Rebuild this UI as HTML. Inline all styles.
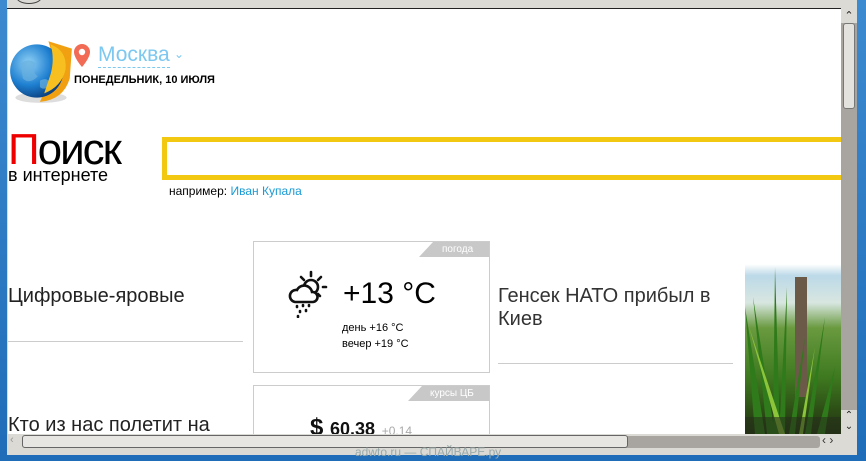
<!DOCTYPE html>
<html><head><meta charset="utf-8"><style>
*{margin:0;padding:0;box-sizing:border-box}
body{width:866px;height:461px;overflow:hidden;background:#2a78c0;font-family:"Liberation Sans","DejaVu Sans",sans-serif;position:relative}
.a{position:absolute}
</style></head><body>
<div class="a" style="left:0;top:0;width:866px;height:461px;background:linear-gradient(#3d8ad0,#1f6cb8)"></div>
<div class="a" style="left:7px;top:0;width:850px;height:455px;background:#dcdad5"></div>
<div class="a" style="left:7px;top:8px;width:834px;height:1px;background:#222"></div>
<div class="a" style="left:16px;top:-10px;width:26px;height:14px;border:1px solid #444;border-radius:50%"></div>
<div class="a" style="left:8px;top:9px;width:833px;height:425px;background:#fff;overflow:hidden">
 <svg class="a" style="left:0px;top:29px" width="66" height="66" viewBox="0 0 62 62">
  <defs><radialGradient id="g" cx="35%" cy="35%" r="70%"><stop offset="0" stop-color="#8fd0f5"/><stop offset=".6" stop-color="#1e7fd0"/><stop offset="1" stop-color="#0b3f80"/></radialGradient></defs>
  <ellipse cx="31" cy="56" rx="24" ry="5" fill="#ddd"/>
  <path d="M38 3 L60 10 L58 38 Q52 58 30 60 L36 46 Q46 40 44 24 Z" fill="#f0a010"/>
  <circle cx="27" cy="31" r="25" fill="url(#g)"/>
  <path d="M12 24 Q20 18 26 24 Q22 32 28 36 Q20 44 14 38 Z M30 40 Q38 36 40 44 Q34 50 30 46Z" fill="#6ab0e0" opacity=".7"/>
  <path d="M40 6 Q56 12 54 30 Q50 46 34 52 L40 34 Q44 20 40 6Z" fill="#f7c020"/>
 </svg>
 <svg class="a" style="left:64px;top:34px" width="20" height="26" viewBox="0 0 20 26"><path d="M10 1a8 8 0 0 0-8 8c0 6 8 15 8 15s8-9 8-15a8 8 0 0 0-8-8z" fill="#f26b55"/><circle cx="10" cy="9" r="3.2" fill="#fff"/></svg>
 <div class="a" style="left:90px;top:33px;font-size:21px;color:#7cc8f0;border-bottom:1px dashed #7cc8f0;line-height:25px">Москва</div>
 <div class="a" style="left:166px;top:38px;font-size:12px;color:#7cc8f0">⌄</div>
 <div class="a" style="left:66px;top:65px;font-size:11px;font-weight:bold;color:#000">ПОНЕДЕЛЬНИК, 10 ИЮЛЯ</div>
 <div class="a" style="left:0px;top:119px;font-size:44px;line-height:44px;color:#000;letter-spacing:-2px"><span style="color:#e00">П</span>оиск</div>
 <div class="a" style="left:0px;top:156px;font-size:18px;color:#000">в интернете</div>
 <div class="a" style="left:154px;top:128px;width:700px;height:43px;border:5px solid #f2c811;border-right:none"></div>
 <div class="a" style="left:161px;top:175px;font-size:12px;color:#000">например: <span style="color:#1a9ad6">Иван Купала</span></div>
 <div class="a" style="left:0;top:276px;font-size:20px;color:#222">Цифровые-яровые</div>
 <div class="a" style="left:0;top:332px;width:235px;height:1px;background:#ccc"></div>
 <div class="a" style="left:0;top:405px;font-size:20px;color:#222">Кто из нас полетит на</div>
 <div class="a" style="left:245px;top:232px;width:237px;height:132px;border:1px solid #ccc"></div>
 <div class="a" style="left:411px;top:233px;width:70px;height:15px;background:#c8c8c8;clip-path:polygon(14px 0,100% 0,100% 100%,0 100%)"></div>
 <div class="a" style="left:434px;top:235px;font-size:10px;color:#fff">погода</div>
 <svg class="a" style="left:279px;top:259px" width="44" height="50" viewBox="0 0 44 50" fill="none" stroke="#111" stroke-width="2.6" stroke-linecap="round">
  <circle cx="24" cy="19" r="7"/><path d="M24 4v4M34 9l-3 3M36 19h3M33 28l-2-2M14 9l3 3"/>
  <path d="M8 34a6 6 0 0 1 2-12a8 8 0 0 1 15 2a5 5 0 0 1 1 10z" fill="#fff"/>
  <path d="M10 38v1M16 37v1M22 37v1M13 43v1M19 42v1M11 48v1"/>
 </svg>
 <div class="a" style="left:335px;top:268px;font-size:30px;color:#000">+13 °C</div>
 <div class="a" style="left:334px;top:311px;font-size:11px;color:#000;line-height:16px">день +16 °C<br>вечер +19 °C</div>
 <div class="a" style="left:245px;top:376px;width:237px;height:60px;border:1px solid #ccc"></div>
 <div class="a" style="left:400px;top:377px;width:81px;height:15px;background:#c8c8c8;clip-path:polygon(14px 0,100% 0,100% 100%,0 100%)"></div>
 <div class="a" style="left:422px;top:379px;font-size:10px;color:#fff">курсы ЦБ</div>
 <div class="a" style="left:302px;top:405px;font-size:24px;font-weight:bold;color:#111">$ <span style="font-size:18px">60.38</span> <span style="font-size:12px;color:#aaa;font-weight:normal">+0.14</span></div>
 <div class="a" style="left:490px;top:276px;font-size:20px;color:#333;line-height:23px">Генсек НАТО прибыл в<br>Киев</div>
 <div class="a" style="left:490px;top:354px;width:235px;height:1px;background:#ccc"></div>
 <div class="a" style="left:737px;top:232px;width:96px;height:193px;background:linear-gradient(#fff 0,#fff 12%,#bcd9e8 18%,#d8e6e0 32%,#6a9a40 45%,#3f7a20 70%,#20300f 100%)"></div>
 <svg class="a" style="left:737px;top:258px" width="96" height="167" viewBox="0 0 96 167">
  <rect x="50" y="10" width="12" height="120" fill="#6b5a48"/>
  <path d="M0 40 L20 167 L10 167Z M8 30 L30 167 L22 167Z M30 0 L35 167 L28 167Z M42 20 L40 167 L34 167Z M60 70 L50 167 L44 167Z M80 50 L66 167 L60 167Z M90 100 L80 167 L72 167Z" fill="#2f7a1a"/>
  <path d="M4 60 L40 167 L34 167Z M70 80 L58 167 L54 167Z" fill="#8cc43a"/>
  <rect x="0" y="150" width="96" height="17" fill="#26301a" opacity=".6"/>
 </svg>
</div>
<div class="a" style="left:841px;top:9px;width:16px;height:425px;background:#a8a4a0"></div>
<div class="a" style="left:841px;top:9px;width:16px;height:14px;background:#dcdad5;font-size:11px;text-align:center;color:#222">⌃</div>
<div class="a" style="left:843px;top:23px;width:12px;height:86px;background:#e4e2de;border:1px solid #777;border-radius:3px"></div>
<div class="a" style="left:841px;top:410px;width:16px;height:24px;background:#dcdad5;font-size:10px;text-align:center;color:#222;line-height:11px">⌃<br>⌄</div>
<div class="a" style="left:8px;top:434px;width:849px;height:15px;background:#dcdad5"></div>
<div class="a" style="left:22px;top:436px;width:798px;height:12px;background:#a8a4a0;border-radius:3px"></div>
<div class="a" style="left:22px;top:435px;width:606px;height:13px;background:#e8e6e2;border:1px solid #666;border-radius:3px"></div>
<div class="a" style="left:10px;top:434px;font-size:11px;color:#999">‹</div>
<div class="a" style="left:822px;top:433px;font-size:12px;color:#333">‹ ›</div>
<div class="a" style="left:355px;top:445px;font-size:12px;color:#9aa">adwto.ru — СПАЙВАРЕ.ру</div>
</body></html>
